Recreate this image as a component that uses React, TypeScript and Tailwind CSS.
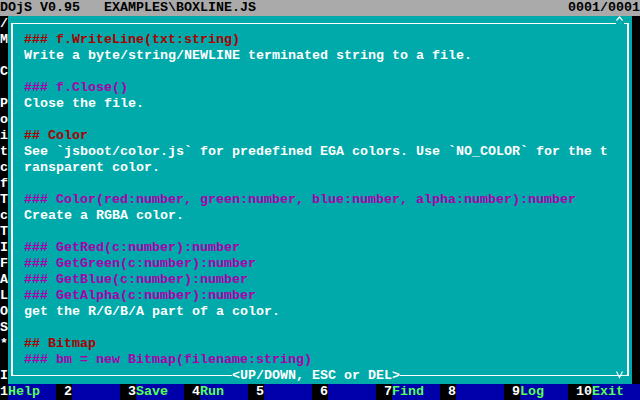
import React from 'react';

type Line = { text: string; tone?: 'h2' | 'h3' };

const lines: Line[] = [
  { text: '### f.WriteLine(txt:string)', tone: 'h2' },
  { text: 'Write a byte/string/NEWLINE terminated string to a file.' },
  { text: '' },
  { text: '### f.Close()', tone: 'h3' },
  { text: 'Close the file.' },
  { text: '' },
  { text: '## Color', tone: 'h2' },
  { text: 'See `jsboot/color.js` for predefined EGA colors. Use `NO_COLOR` for the t' },
  { text: 'ransparent color.' },
  { text: '' },
  { text: '### Color(red:number, green:number, blue:number, alpha:number):number', tone: 'h3' },
  { text: 'Create a RGBA color.' },
  { text: '' },
  { text: '### GetRed(c:number):number', tone: 'h3' },
  { text: '### GetGreen(c:number):number', tone: 'h3' },
  { text: '### GetBlue(c:number):number', tone: 'h3' },
  { text: '### GetAlpha(c:number):number', tone: 'h3' },
  { text: 'get the R/G/B/A part of a color.' },
  { text: '' },
  { text: '## Bitmap', tone: 'h2' },
  { text: '### bm = new Bitmap(filename:string)', tone: 'h3' },
];

// first column of the editor peeking out behind the help box
const gutter = ['/', 'M', '', 'C', '', 'P', 'o', 'i', 't', 'c', 'f', 'T', 'c', 'T', 'I', 'F', 'A', 'L', 'O', 'S', '*', '', 'I'];

const fkeys = [
  { n: '1', label: 'Help' },
  { n: '2', label: '' },
  { n: '3', label: 'Save' },
  { n: '4', label: 'Run' },
  { n: '5', label: '' },
  { n: '6', label: '' },
  { n: '7', label: 'Find' },
  { n: '8', label: '' },
  { n: '9', label: 'Log' },
  { n: '10', label: 'Exit' },
];

const toneClass = (tone?: Line['tone']) => {
  if (tone === 'h2') return 'text-[#aa0000]';
  if (tone === 'h3') return 'text-[#aa00aa]';
  return 'text-white';
};

export default function App() {
  return (
    <div className="w-[640px] h-[400px] bg-black flex flex-col overflow-hidden whitespace-pre font-['Liberation_Mono',monospace] font-bold text-[13.333px] leading-4">
      {/* Title bar */}
      <div className="h-4 bg-[#aaaaaa] text-black flex justify-between">
        <span>DOjS V0.95   EXAMPLES\BOXLINE.JS</span>
        <span>0001/0001</span>
      </div>

      <div className="flex h-[368px]">
        <div className="w-2 flex flex-col text-white">
          {gutter.map((c, i) => (
            <div key={i} className="h-4">{c}</div>
          ))}
        </div>

        {/* Help dialog */}
        <div className="w-[624px] bg-[#00aaaa] relative pt-[7px] px-[3px] pb-[8px] flex">
          <div className="flex-1 border-t border-b border-l-2 border-r-2 border-white pl-[11px] pt-2 overflow-hidden">
            {lines.map((l, i) => (
              <div key={i} className={`h-4 ${toneClass(l.tone)}`}>{l.text}</div>
            ))}
          </div>

          {/* scroll arrows sit on the frame */}
          <svg className="absolute left-[608px] top-0 w-2 h-4 bg-[#00aaaa]" viewBox="0 0 8 16">
            <polyline points="0.5,4.5 3.5,1 6.5,4.5" fill="none" stroke="white" strokeWidth="1.2" />
          </svg>
          <span className="absolute left-[224px] top-[352px] h-4 bg-[#00aaaa] text-white">{'<UP/DOWN, ESC or DEL>'}</span>
          <svg className="absolute left-[608px] top-[352px] w-2 h-4" viewBox="0 0 8 16">
            <polyline points="0.5,3.5 3.5,9.5 6.5,3.5" fill="none" stroke="white" strokeWidth="1.2" />
          </svg>
        </div>

        <div className="w-2" />
      </div>

      {/* Function keys */}
      <div className="h-4 flex">
        {fkeys.map((k) => (
          <div key={k.n} className="w-16 flex">
            <span className="text-white">{k.n}</span>
            <span className="w-12 bg-[#0000aa] text-[#55ff55]">{k.label}</span>
          </div>
        ))}
      </div>
    </div>
  );
}
